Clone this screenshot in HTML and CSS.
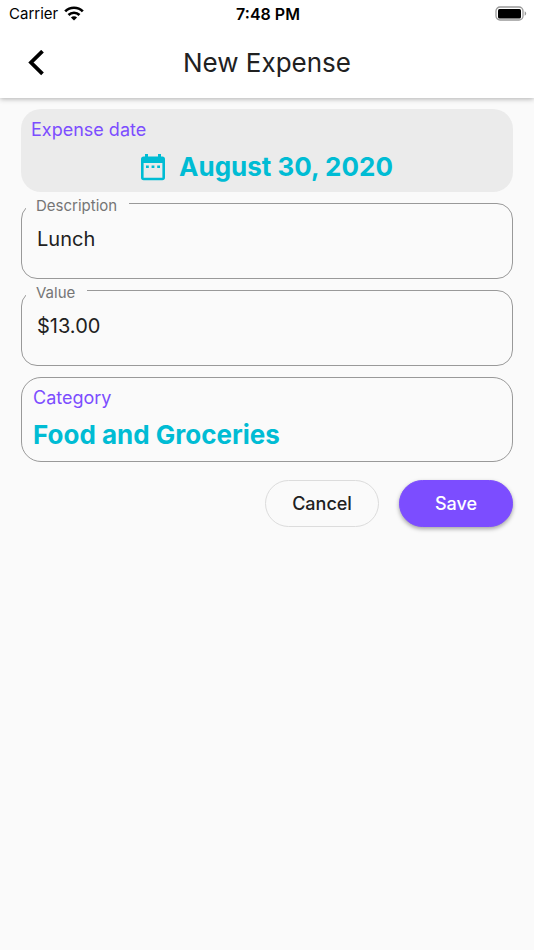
FILE: index.html
```html
<!DOCTYPE html>
<html lang="en">
<head>
    <meta charset="utf-8">
    <meta name="viewport" content="width=device-width, initial-scale=1">
    <title>New Expense</title>
    <link rel="stylesheet" href="styles.css">
</head>
<body>
    <header class="header">
        <div class="status-bar">
            <div class="carrier">
                <span>Carrier</span>
                <svg width="20" height="15" viewBox="0 0 20 15" aria-hidden="true">
                    <g fill="none" stroke="#000" stroke-width="2.7">
                        <path d="M1.2 5.4a12.4 12.4 0 0 1 17.6 0"/>
                        <path d="M4.5 9a7.8 7.8 0 0 1 11 0"/>
                    </g>
                    <path d="M10 14.6 6.9 11.6a4.4 4.4 0 0 1 6.2 0z"/>
                </svg>
            </div>
            <span class="time">7:48 PM</span>
            <svg class="battery" width="32" height="16" viewBox="0 0 32 16" aria-hidden="true">
                <rect x="1" y="1" width="27" height="13" rx="4" fill="none" stroke="#999" stroke-width="1.3"/>
                <rect x="3" y="3" width="23" height="9.500" rx="1.5"/>
                <path d="M29.7 5.3c2 .8 2 3.6 0 4.4z" fill="#999"/>
            </svg>
        </div>
        <div class="app-bar">
            <button type="button" class="back" aria-label="Back">
                <svg width="16" height="26" viewBox="0 0 16 26" aria-hidden="true">
                    <path d="M14.500 1.200 3 12.500 14.500 23.800" fill="none" stroke="#000" stroke-width="3.8"/>
                </svg>
            </button>
            <h1>New Expense</h1>
        </div>
    </header>

    <form class="form">
        <div class="card date-card">
            <label class="card-label" for="date">Expense date</label>
            <button type="button" id="date" class="picker date-picker">
                <svg width="24" height="27" viewBox="0 0 24 27" aria-hidden="true">
                    <path fill="currentColor" fill-rule="evenodd" d="M4 0h3v2.6h10V0h3v2.6h1.3A2.7 2.7 0 0 1 24 5.3v18.3a2.7 2.7 0 0 1-2.7 2.7H2.7A2.7 2.7 0 0 1 0 23.6V5.300a2.700 2.700 0 0 1 2.700-2.700H4zM2.600 9v14.700h18.800V9z"/>
                    <path fill="currentColor" d="M5 11.500h2.800v2.600H5zM10.600 11.500h2.800v2.600h-2.800zM16.200 11.500H19v2.600h-2.800z"/>
                </svg>
                <span>August 30, 2020</span>
            </button>
        </div>

        <div class="field">
            <label for="description">Description</label>
            <input type="text" id="description" value="Lunch">
        </div>

        <div class="field">
            <label for="value">Value</label>
            <input type="text" id="value" inputmode="decimal" value="$13.00">
        </div>

        <div class="card category-card">
            <label class="card-label" for="category">Category</label>
            <button type="button" id="category" class="picker">Food and Groceries</button>
        </div>

        <div class="actions">
            <button type="button" class="btn btn-cancel">Cancel</button>
            <button type="submit" class="btn btn-save">Save</button>
        </div>
    </form>
</body>
</html>
```

FILE: styles.css
```css
* {
    box-sizing: border-box;
}

body {
    margin: 0;
    background: #fafafa;
    color: #212121;
    font-family: Inter, "Liberation Sans", sans-serif;
}

button, input {
    font-family: inherit;
    color: inherit;
}

button {
    cursor: pointer;
}

svg {
    display: block;
}

.header {
    background: white;
    box-shadow: 0 1px 5px rgba(0, 0, 0, 0.3);
}

.status-bar {
    display: grid;
    grid-template-columns: 1fr auto 1fr;
    align-items: center;
    height: 27px;
    padding: 0 7px 0 9px;
    color: black;
    font-size: 15px;
}

.carrier {
    display: flex;
    align-items: center;
    gap: 6px;
}

.time {
    font-size: 16px;
    font-weight: 600;
}

.battery {
    justify-self: end;
}

.app-bar {
    display: grid;
    grid-template-columns: 56px 1fr 56px;
    align-items: center;
    height: 71px;
    padding: 0 8px;
}

.back {
    display: flex;
    justify-content: center;
    padding: 12px 0;
    border: none;
    background: none;
}

.app-bar h1 {
    margin: 0;
    font-size: 26px;
    font-weight: 400;
    text-align: center;
}

.form {
    display: flex;
    flex-direction: column;
    gap: 11px;
    padding: 11px 21px;
}

.card {
    border-radius: 20px;
    padding: 10px;
}

.card-label {
    display: block;
    color: #7c4dff;
    font-size: 18px;
    line-height: 22px;
}

.picker {
    display: block;
    width: 100%;
    margin-top: 10px;
    padding: 0;
    border: none;
    background: none;
    color: #00bcd4;
    font-size: 26px;
    font-weight: 700;
    line-height: 32px;
    text-align: left;
}

.date-card {
    padding-bottom: 9px;
    background: #ebebeb;
}

.date-picker {
    display: flex;
    align-items: center;
    justify-content: center;
    gap: 14px;
}

.category-card {
    padding: 9px 11px 10px;
    border: 1px solid #999;
}

.field {
    position: relative;
}

/* the label sits over the top border and cuts a notch in it */
.field label {
    position: absolute;
    top: -6px;
    left: 5px;
    padding: 0 12px 0 10px;
    background: #fafafa;
    color: #757575;
    font-size: 15px;
    line-height: 18px;
}

.field input {
    display: block;
    width: 100%;
    height: 76px;
    padding: 0 15px 4px;
    border: 1px solid #999;
    border-radius: 16px;
    background: none;
    font-size: 20px;
}

.actions {
    display: flex;
    justify-content: flex-end;
    gap: 20px;
    margin-top: 7px;
}

.btn {
    min-width: 114px;
    height: 47px;
    border: 1px solid #dcdcdc;
    border-radius: 24px;
    background: none;
    font-size: 18px;
    font-weight: 500;
}

.btn-save {
    border-color: #7c4dff;
    background: #7c4dff;
    color: white;
    box-shadow: 0 2px 4px rgba(0, 0, 0, 0.35);
}
```
